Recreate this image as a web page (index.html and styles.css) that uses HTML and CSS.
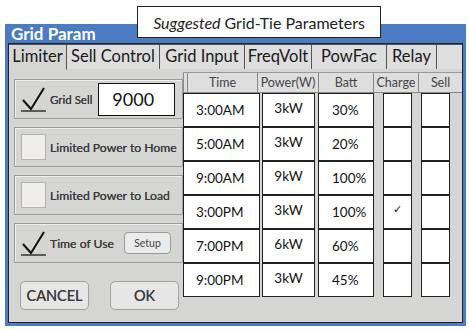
FILE: index.html
```html
<!DOCTYPE html>
<html lang="en">
<head>
    <meta charset="UTF-8">
    <meta name="viewport" content="width=device-width, initial-scale=1.0">
    <title>Grid Param</title>
    <link rel="stylesheet" href="styles.css">
</head>
<body>
    <div class="suggest"><em>Suggested</em> Grid-Tie Parameters</div>
    <div class="frame">
        <div class="title">Grid Param</div>
        <div class="panel">
            <div class="tabs">
                <div class="tab active" style="width:58px">Limiter</div>
                <div class="tab" style="width:93px">Sell Control</div>
                <div class="tab" style="width:85px">Grid Input</div>
                <div class="tab" style="width:67px">FreqVolt</div>
                <div class="tab" style="width:75px">PowFac</div>
                <div class="tab" style="width:50px">Relay</div>
                <div class="tab filler"></div>
            </div>
            <div class="content">
                <div class="left">
                    <div class="group">
                        <div class="check on">
                            <svg width="25" height="26" viewBox="0 0 25 26"><polyline points="2,14 10,23 23,2" fill="none" stroke="#111" stroke-width="2"/><line x1="0" y1="25" x2="25" y2="25" stroke="#333" stroke-width="1.5"/></svg>
                        </div>
                        <span class="label small">Grid Sell</span>
                        <div class="field">9000</div>
                    </div>
                    <div class="group">
                        <div class="check"></div>
                        <span class="label">Limited Power to Home</span>
                    </div>
                    <div class="group">
                        <div class="check"></div>
                        <span class="label">Limited Power to Load</span>
                    </div>
                    <div class="group">
                        <div class="check on">
                            <svg width="25" height="26" viewBox="0 0 25 26"><polyline points="2,14 10,23 23,2" fill="none" stroke="#111" stroke-width="2"/><line x1="0" y1="25" x2="25" y2="25" stroke="#333" stroke-width="1.5"/></svg>
                        </div>
                        <span class="label">Time of Use</span>
                        <button class="setup">Setup</button>
                    </div>
                    <div class="buttons">
                        <button class="btn">CANCEL</button>
                        <button class="btn">OK</button>
                    </div>
                </div>
                <div class="table">
                    <div class="head">
                        <div class="hc lead"></div>
                        <div class="hc c-time">Time</div>
                        <div class="hc c-pow">Power(W)</div>
                        <div class="hc c-batt">Batt</div>
                        <div class="hc c-chg">Charge</div>
                        <div class="hc c-sell">Sell</div>
                    </div>
                    <div class="row">
                        <div class="cell time">3:00AM</div>
                        <div class="cell pow">3kW</div>
                        <div class="cell batt">30%</div>
                        <div class="cell box chg"></div>
                        <div class="cell box sell"></div>
                    </div>
                    <div class="row">
                        <div class="cell time">5:00AM</div>
                        <div class="cell pow">3kW</div>
                        <div class="cell batt">20%</div>
                        <div class="cell box chg"></div>
                        <div class="cell box sell"></div>
                    </div>
                    <div class="row">
                        <div class="cell time">9:00AM</div>
                        <div class="cell pow">9kW</div>
                        <div class="cell batt">100%</div>
                        <div class="cell box chg"></div>
                        <div class="cell box sell"></div>
                    </div>
                    <div class="row">
                        <div class="cell time">3:00PM</div>
                        <div class="cell pow">3kW</div>
                        <div class="cell batt">100%</div>
                        <div class="cell box chg">&#10003;</div>
                        <div class="cell box sell"></div>
                    </div>
                    <div class="row">
                        <div class="cell time">7:00PM</div>
                        <div class="cell pow">6kW</div>
                        <div class="cell batt">60%</div>
                        <div class="cell box chg"></div>
                        <div class="cell box sell"></div>
                    </div>
                    <div class="row">
                        <div class="cell time">9:00PM</div>
                        <div class="cell pow">3kW</div>
                        <div class="cell batt">45%</div>
                        <div class="cell box chg"></div>
                        <div class="cell box sell"></div>
                    </div>
                </div>
            </div>
        </div>
    </div>
</body>
</html>
```

FILE: styles.css
```css
* {
    box-sizing: border-box;
}

body {
    margin: 0;
    background-color: #fff;
    font-family: Lato, "Open Sans", sans-serif;
    color: #222;
}

.suggest {
    position: absolute;
    left: 137px;
    top: 6px;
    width: 244px;
    height: 32px;
    border: 1px solid #222;
    background-color: #fff;
    font-size: 16px;
    display: flex;
    align-items: center;
    justify-content: center;
    gap: 4px;
    z-index: 2;
}

.frame {
    margin: 24px 0 0 5px;
    width: 461px;
    height: 302px;
    background-color: #4a7bc3;
    padding: 0 3px 3px;
    display: flex;
    flex-direction: column;
}

.title {
    height: 19px;
    color: #fff;
    font-weight: bold;
    font-size: 17px;
    line-height: 19px;
    padding-left: 3px;
}

.panel {
    flex: 1;
    border: 1px solid #222;
    background-color: #d5d5d3;
}

.tabs {
    display: flex;
    height: 25px;
    border-bottom: 1px solid #555;
}

.tab {
    height: 25px;
    border-right: 1px solid #555;
    border-top: 1px solid #555;
    background-color: #dedede;
    font-size: 16.5px;
    line-height: 23px;
    text-align: center;
    color: #1a1a1a;
    margin-bottom: -1px;
}

.tab.active {
    background-color: #d5d5d3;
    border-bottom: 1px solid #d5d5d3;
    height: 26px;
}

.tab.filler {
    flex: 1;
    border-right: none;
}

.content {
    display: flex;
}

.left {
    width: 174px;
    padding: 10px 0 0 5px;
    display: flex;
    flex-direction: column;
    gap: 8px;
}

.group {
    height: 40px;
    border: 1px solid #9b9b9b;
    box-shadow: inset 1px 1px 0 #efefef;
    display: flex;
    align-items: center;
    padding-left: 6px;
}

.check {
    width: 25px;
    height: 26px;
    background-color: #efedec;
    border: 1px solid #b3b3b3;
    flex-shrink: 0;
}

.check.on {
    border: none;
    background: transparent;
}

.check.on svg {
    display: block;
}

.label {
    margin-left: 4px;
    font-size: 12.2px;
    color: #3c3c3c;
    text-shadow: 0 0 0.4px #3c3c3c;
    white-space: nowrap;
}

.label.small {
    font-size: 11.5px;
}

.field {
    margin-left: 6px;
    width: 77px;
    height: 33px;
    border: 1px solid #111;
    background-color: #fff;
    font-size: 18px;
    line-height: 31px;
    padding-left: 13px;
    color: #111;
}

.setup {
    margin-left: 10px;
    width: 47px;
    height: 22px;
    border: 1px solid #9a9a9a;
    border-radius: 4px;
    background-color: #ebebeb;
    font-family: Lato, sans-serif;
    font-size: 10.5px;
    color: #444;
    padding: 0;
}

.buttons {
    display: flex;
    gap: 21px;
    margin-top: 10px;
    padding-left: 6px;
}

.btn {
    width: 69px;
    height: 29px;
    border: 1px solid #a0a0a0;
    border-radius: 5px;
    background-color: #e6e6e6;
    font-family: Lato, sans-serif;
    font-size: 14.5px;
    color: #3c3c3c;
    text-shadow: 0 0 0.5px #3c3c3c;
    padding: 0;
}

.table {
    padding-top: 3px;
    width: 279px;
}

.head {
    display: flex;
    height: 21px;
    border-top: 1px solid #999;
    border-bottom: 1px solid #888;
    background-color: #dedede;
}

.hc {
    border-left: 1px solid #888;
    font-size: 12.5px;
    line-height: 19px;
    text-align: center;
    color: #444;
}

.hc.lead {
    width: 4px;
}

.c-time { width: 70px; }
.c-pow { width: 61px; }
.c-batt { width: 55px; }
.c-chg { width: 45px; }
.c-sell { flex: 1; }

.row {
    display: flex;
    height: 34px;
}

.cell {
    height: 34px;
    border: 1.5px solid #222;
    background-color: #fff;
    font-size: 13.5px;
    color: #111;
    display: flex;
    align-items: center;
}

.time {
    width: 77px;
    padding-left: 12px;
}

.pow {
    width: 53px;
    margin-left: 2px;
    justify-content: center;
    padding-bottom: 5px;
}

.batt {
    width: 56px;
    margin-left: 3px;
    padding-left: 13px;
}

.box {
    width: 29px;
}

.chg {
    margin-left: 9px;
    font-size: 11px;
    justify-content: center;
    padding-bottom: 6px;
}

.sell {
    margin-left: 9px;
}
```
